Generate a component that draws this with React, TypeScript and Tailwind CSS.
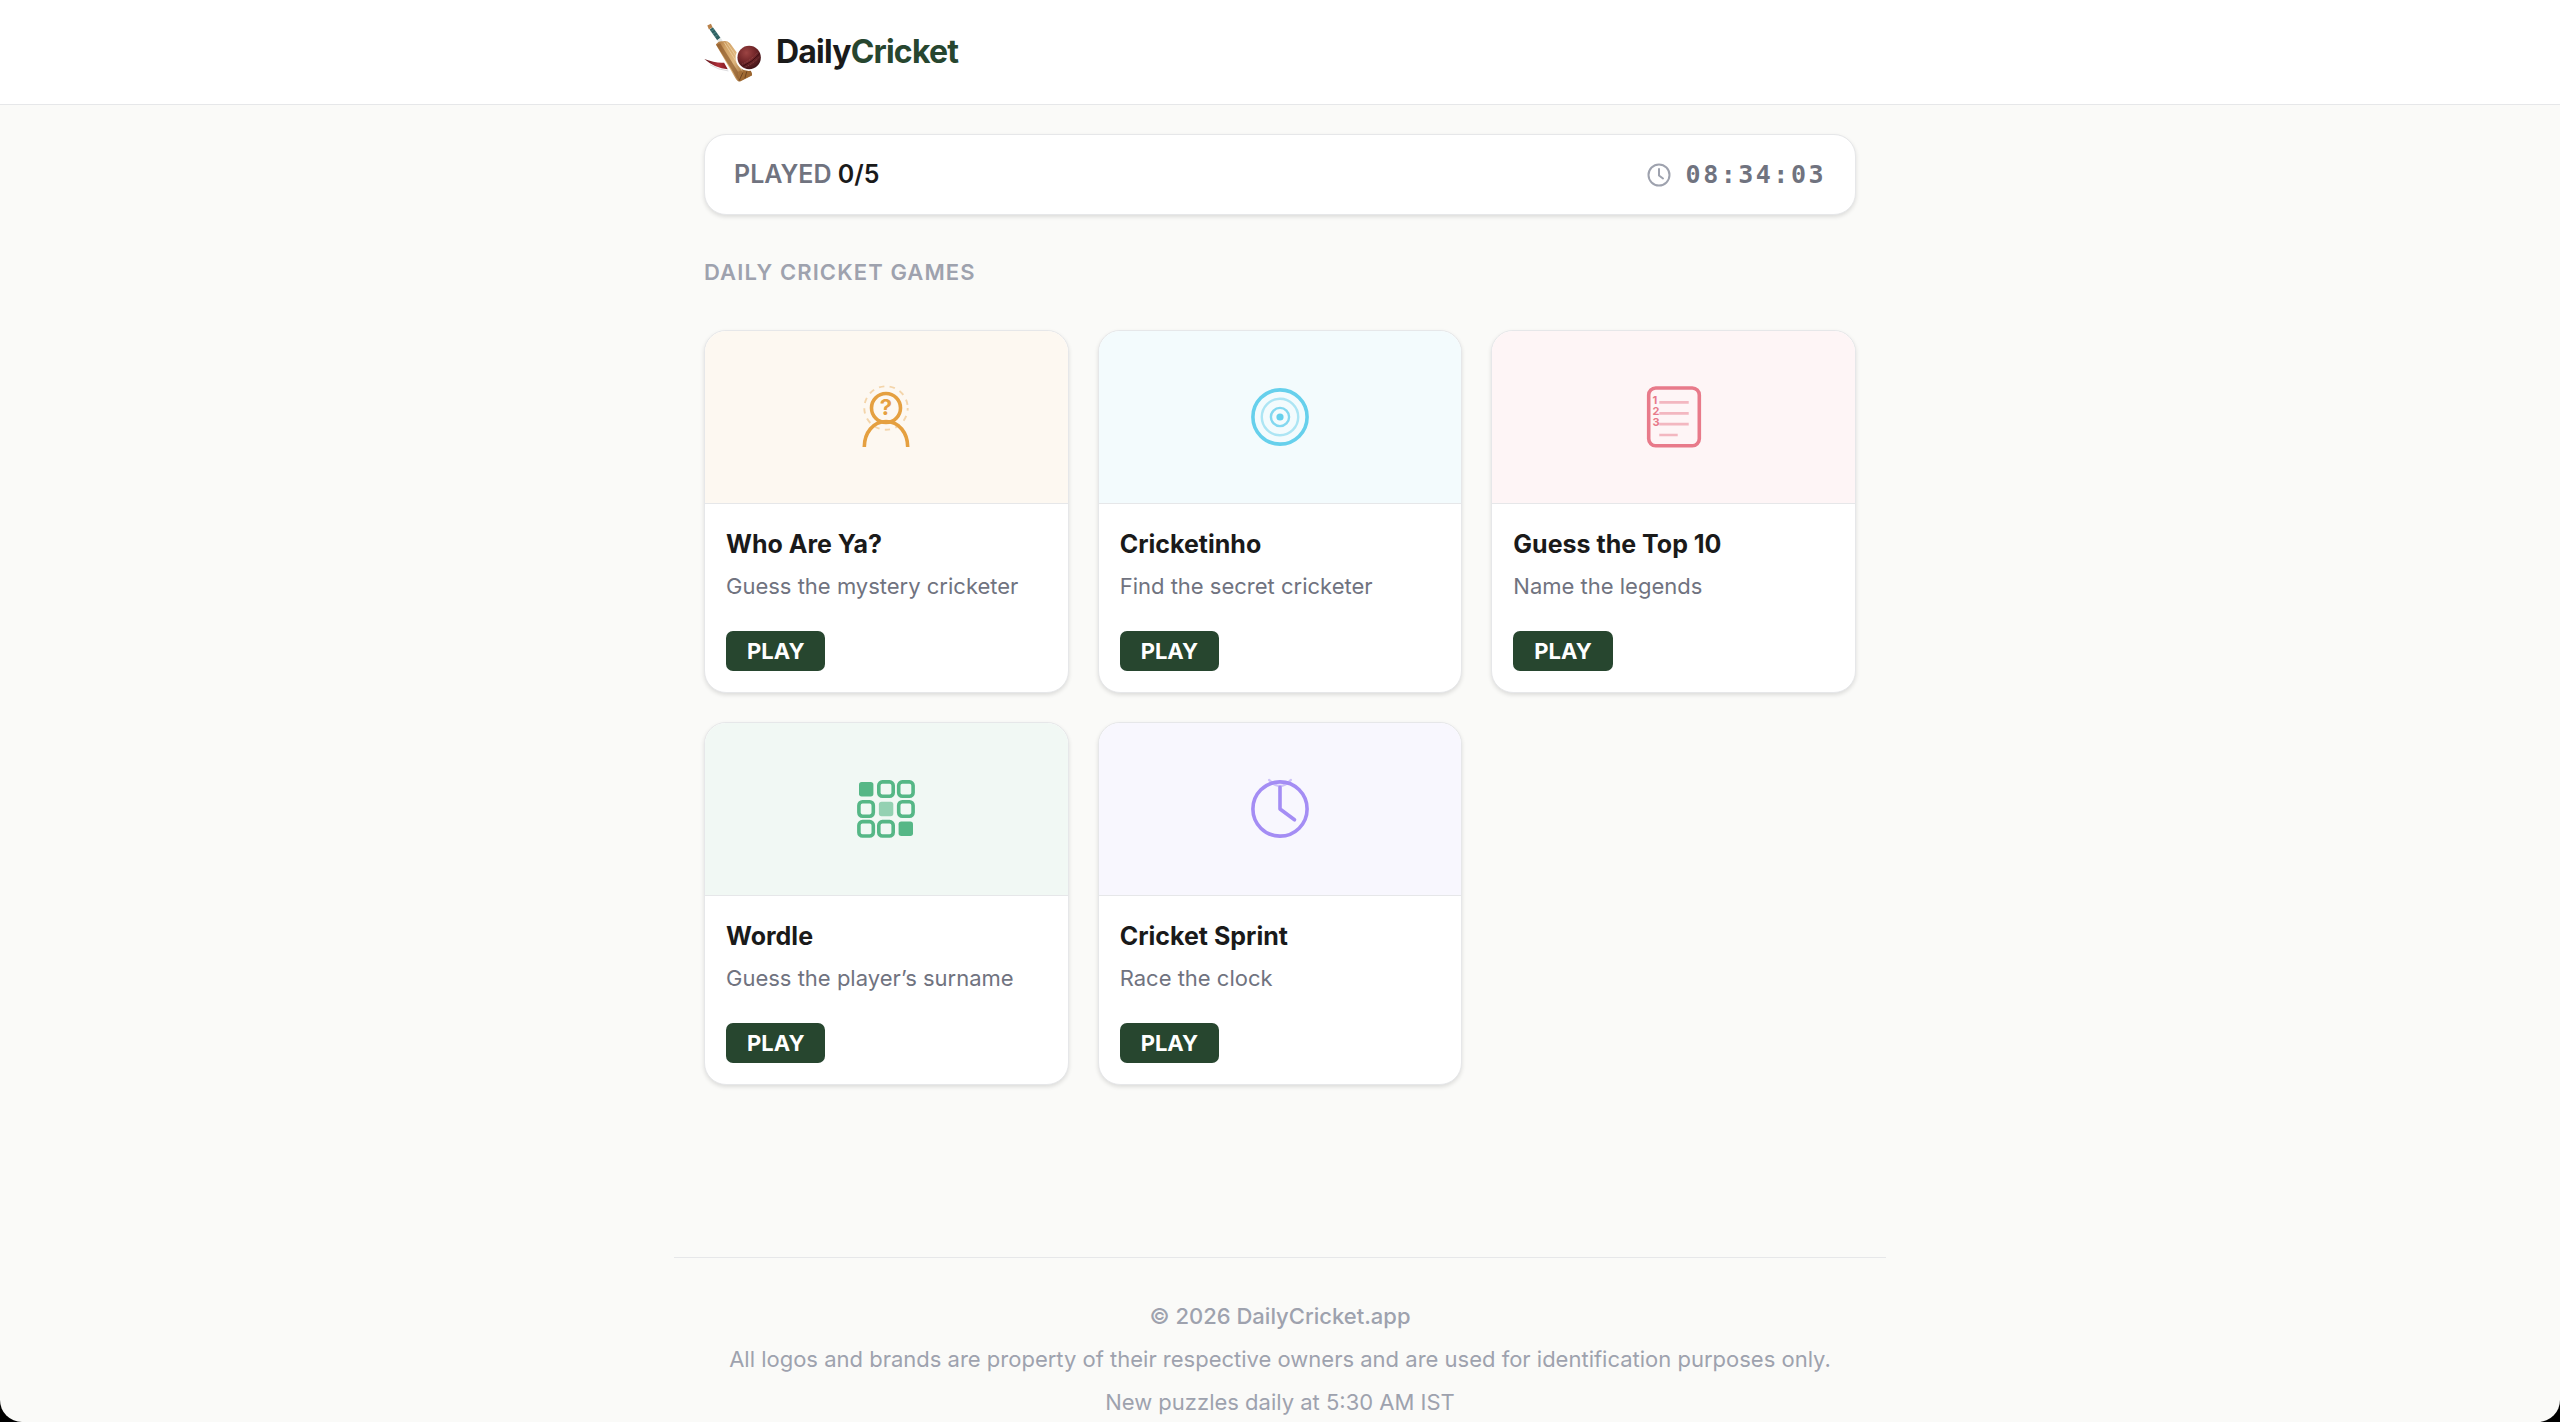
import type { ReactNode } from "react";

function Logo() {
  return (
    <svg viewBox="42 66 176 178" className="h-[59px] w-[58px]" aria-hidden="true">
      <defs>
        <linearGradient id="wood" x1="0" y1="0" x2="1" y2="0.35">
          <stop offset="0" stopColor="#a9713a" />
          <stop offset="0.3" stopColor="#d3a468" />
          <stop offset="0.6" stopColor="#dfb67e" />
          <stop offset="1" stopColor="#94602c" />
        </linearGradient>
        <radialGradient id="ball" cx="0.38" cy="0.3" r="0.75">
          <stop offset="0" stopColor="#9c4443" />
          <stop offset="0.5" stopColor="#74272a" />
          <stop offset="1" stopColor="#3c1216" />
        </radialGradient>
        <linearGradient id="swoosh" x1="0" y1="0" x2="1" y2="0">
          <stop offset="0" stopColor="#5c1418" />
          <stop offset="0.6" stopColor="#b02f3a" />
          <stop offset="1" stopColor="#7f1a20" />
        </linearGradient>
      </defs>
      <path d="M43 175 Q76 188 103 186 L114 206 Q76 204 43 175Z" fill="url(#swoosh)" />
      <path d="M60 192 Q86 208 116 211" fill="none" stroke="#c9c9cc" strokeWidth="2" />
      <path d="M64 82 L87 114" stroke="#2f6163" strokeWidth="12" />
      <path d="M63 91 l9 -6 M69 99 l9 -6 M75 107 l9 -6" stroke="#5f9a96" strokeWidth="2" />
      <path d="M52 73 L63 68 L68 78 L57 85Z" fill="#b98149" />
      <path d="M81 118 L93 111 L99 120 L88 126Z" fill="#e4e7e5" />
      <path d="M78 131 Q86 119 99 121 Q112 118 121 127 L166 188 Q190 213 188 224 L151 243 Q143 243 137 232Z" fill="url(#wood)" />
      <path d="M80 132 L140 230 L150 242 L146 215 L91 127Z" fill="#8b5729" opacity="0.65" />
      <path d="M103 124 L160 214 M111 124 L151 184" stroke="#f0d6aa" strokeWidth="3" opacity="0.7" />
      <path d="M146 213 Q172 203 187 217 L187 225 L151 243Z" fill="#a06a31" opacity="0.75" />
      <path d="M149 240 L160 216 M166 233 L172 212" stroke="#643d1c" strokeWidth="2.5" />
      <circle cx="178" cy="171" r="40" fill="#fff" />
      <circle cx="179" cy="170" r="35.5" fill="url(#ball)" />
      <path d="M161 196 Q188 184 211 159" fill="none" stroke="#32090d" strokeWidth="2.5" />
      <path d="M158 190 Q184 179 207 153 M165 200 Q192 189 213 166" fill="none" stroke="#b0706a" strokeWidth="1.5" strokeDasharray="3 3" />
    </svg>
  );
}

function MysteryIcon() {
  return (
    <svg viewBox="1 2 90 90" className="size-[90px]" fill="none" stroke="#e5a040" aria-hidden="true">
      <circle cx="46" cy="38" r="21.7" strokeWidth="1.9" strokeDasharray="5.4 5.4" strokeDashoffset="2.7" opacity="0.4" />
      <circle cx="46" cy="38" r="14.5" strokeWidth="3.6" />
      <path d="M24.3 77C24.3 63 33 51.5 46 51.5S67.7 63 67.7 77" strokeWidth="3.6" />
      <text x="46" y="45" textAnchor="middle" fontSize="22" fontWeight="700" fill="#e5a040" stroke="none">?</text>
    </svg>
  );
}

function TargetIcon() {
  return (
    <svg viewBox="0 2 90 90" className="size-[90px]" fill="none" stroke="#66d0ec" aria-hidden="true">
      <circle cx="45" cy="47" r="27.1" strokeWidth="3.6" />
      <circle cx="45" cy="47" r="18.2" strokeWidth="2.4" opacity="0.5" />
      <circle cx="45" cy="47" r="9.1" strokeWidth="2.4" opacity="0.8" />
      <circle cx="45" cy="47" r="3.6" fill="#66d0ec" stroke="none" />
    </svg>
  );
}

function ListIcon() {
  return (
    <svg viewBox="-1 2 90 90" className="size-[90px]" fill="none" stroke="#e87a8a" aria-hidden="true">
      <rect x="18.7" y="18" width="50.6" height="57.8" rx="7" strokeWidth="3.6" />
      <path d="M29.3 32.4H58.7M29.3 43.3H58.7M29.3 54.2H58.7M29.3 65H47.7" strokeWidth="2.7" opacity="0.5" />
      <g fill="#e87a8a" stroke="none" fontSize="11" fontWeight="700">
        <text x="22.500" y="34">1</text>
        <text x="22.500" y="45">2</text>
        <text x="22.500" y="56">3</text>
      </g>
    </svg>
  );
}

function GridIcon() {
  return (
    <svg viewBox="1 -1 90 90" className="size-[90px]" fill="none" stroke="#56b786" strokeWidth="3.6" aria-hidden="true">
      <rect x="19" y="17" width="14.4" height="14.4" rx="2.7" fill="#56b786" stroke="none" />
      <rect x="38.8" y="16.9" width="14.4" height="14.4" rx="3.6" />
      <rect x="58.7" y="16.9" width="14.4" height="14.4" rx="3.6" />
      <rect x="18.9" y="36.8" width="14.4" height="14.4" rx="3.6" />
      <rect x="38.9" y="36.8" width="14.4" height="14.4" rx="2.7" fill="#56b786" stroke="none" opacity="0.6" />
      <rect x="58.7" y="36.8" width="14.4" height="14.4" rx="3.6" />
      <rect x="18.9" y="56.6" width="14.4" height="14.4" rx="3.6" />
      <rect x="38.8" y="56.6" width="14.4" height="14.4" rx="3.6" />
      <rect x="58.6" y="56.6" width="14.4" height="14.4" rx="2.7" fill="#56b786" stroke="none" />
    </svg>
  );
}

function SprintIcon() {
  return (
    <svg viewBox="0 -1 90 90" className="size-[90px]" fill="none" stroke="#a48df4" strokeLinecap="round" strokeLinejoin="round" aria-hidden="true">
      <circle cx="45" cy="44" r="27.1" strokeWidth="3.6" />
      <path d="M45 22.3V44L59.5 54.8" strokeWidth="3.6" />
      <path d="M34.2 15Q45 27 55.8 15" strokeWidth="2.4" opacity="0.5" />
    </svg>
  );
}

type Game = { title: string; text: string; tint: string; icon: ReactNode };

const games: Game[] = [
  { title: "Who Are Ya?", text: "Guess the mystery cricketer", tint: "bg-[#fdf8f1]", icon: <MysteryIcon /> },
  { title: "Cricketinho", text: "Find the secret cricketer", tint: "bg-[#f3fbfd]", icon: <TargetIcon /> },
  { title: "Guess the Top 10", text: "Name the legends", tint: "bg-[#fef5f6]", icon: <ListIcon /> },
  { title: "Wordle", text: "Guess the player’s surname", tint: "bg-[#f1f8f4]", icon: <GridIcon /> },
  { title: "Cricket Sprint", text: "Race the clock", tint: "bg-[#f8f7fe]", icon: <SprintIcon /> },
];

function GameCard({ title, text, tint, icon }: Game) {
  return (
    <article className="overflow-hidden rounded-[22px] border border-[#e6e7e9] bg-white shadow-[0_2px_4px_rgba(0,0,0,0.12)]">
      <div className={`flex h-[173px] items-center justify-center border-b border-[#e6e7e9] ${tint}`}>{icon}</div>
      <div className="px-[21px] pt-[22px] pb-[21px]">
        <h3 className="text-[25px] leading-9 font-bold">{title}</h3>
        <p className="mt-2 text-[22px] leading-[33px] text-[#70737f]">{text}</p>
        <button type="button" className="mt-7 flex h-10 items-center rounded-[7px] bg-[#27462f] px-[21px] text-[22px] font-bold text-white">
          PLAY
        </button>
      </div>
    </article>
  );
}

export default function App() {
  return (
    <div className="bg-black font-['Inter',sans-serif] text-[#1a1a1a]">
      <div className="min-h-screen overflow-hidden rounded-b-[22px] bg-[#fafaf8]">
        <header className="border-b border-[#e6e7e9] bg-white">
          <div className="mx-auto flex h-[104px] max-w-[1212px] items-center px-[30px]">
            <a href="#" className="flex items-center gap-[14px] text-[32px] font-bold tracking-tight">
              <Logo />
              <span>
                Daily<span className="text-[#27462f]">Cricket</span>
              </span>
            </a>
          </div>
        </header>

        <main className="mx-auto max-w-[1212px] px-[30px] pt-[29px]">
          <section className="flex h-[81px] items-center justify-between rounded-[22px] border border-[#e6e7e9] bg-white px-[29px] text-[25px] shadow-[0_2px_4px_rgba(0,0,0,0.12)]">
            <p className="font-semibold text-[#70737f]">
              PLAYED <span className="text-[#1a1a1a]">0/5</span>
            </p>
            <div className="flex items-center gap-[15px]">
              <svg viewBox="0 0 24 24" className="size-6 text-[#9ea2ae]" fill="none" stroke="currentColor" strokeWidth="2" strokeLinecap="round" strokeLinejoin="round" aria-hidden="true">
                <circle cx="12" cy="12" r="10.5" />
                <path d="M12 6v6.500l4 3" />
              </svg>
              <time className="font-['DejaVu_Sans_Mono',monospace] font-bold tracking-widest text-[#70737f]">08:34:03</time>
            </div>
          </section>

          <h2 className="mt-[41px] mb-[42px] text-[22px] leading-8 font-semibold tracking-wider text-[#9ea2ae]">
            DAILY CRICKET GAMES
          </h2>

          <div className="grid grid-cols-3 gap-[29px]">
            {games.map((game) => (
              <GameCard key={game.title} {...game} />
            ))}
          </div>
        </main>

        <footer className="mx-auto mt-[172px] flex max-w-[1212px] flex-col gap-[9px] border-t border-[#e6e7e9] pt-[41px] text-center text-[22px] leading-[34px] text-[#9ea2ae]">
          <p className="font-medium">© 2026 DailyCricket.app</p>
          <p>All logos and brands are property of their respective owners and are used for identification purposes only.</p>
          <p>New puzzles daily at 5:30 AM IST</p>
        </footer>
      </div>
    </div>
  );
}
